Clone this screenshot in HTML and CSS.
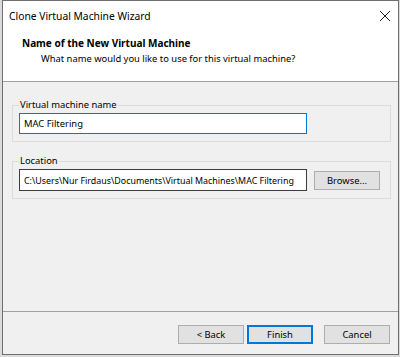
FILE: index.html
```html
<!DOCTYPE html>
<html lang="en">
  <head>
    <meta charset="UTF-8" />
    <meta name="viewport" content="width=device-width, initial-scale=1.0" />
    <title>Clone Virtual Machine Wizard</title>
    <link rel="stylesheet" href="styles.css">
  </head>
  <body>
    <div class="wizard">
      <div class="titlebar">
        <span class="title">Clone Virtual Machine Wizard</span>
        <svg class="close" width="12" height="12" viewBox="0 0 12 12">
          <path d="M1 1 L11 11 M11 1 L1 11" stroke="#222" stroke-width="1" fill="none" />
        </svg>
      </div>

      <div class="header">
        <h2 class="header-title">Name of the New Virtual Machine</h2>
        <p class="header-sub">What name would you like to use for this virtual machine?</p>
      </div>

      <div class="content">
        <fieldset class="group">
          <legend>Virtual machine name</legend>
          <input type="text" class="textbox focused" value="MAC Filtering" />
        </fieldset>

        <fieldset class="group">
          <legend>Location</legend>
          <div class="row">
            <input type="text" class="textbox path" value="C:\Users\Nur Firdaus\Documents\Virtual Machines\MAC Filtering" />
            <button class="btn browse">Browse...</button>
          </div>
        </fieldset>
      </div>

      <div class="footer">
        <button class="btn">&lt; Back</button>
        <button class="btn default">Finish</button>
        <button class="btn cancel">Cancel</button>
      </div>
    </div>
  </body>
</html>
```

FILE: styles.css
```css
* {
  margin: 0;
  padding: 0;
  box-sizing: border-box;
}

body {
  font-family: "Noto Sans", "Open Sans", sans-serif;
  font-size: 9.4px;
  color: #000;
  background-color: #dadada;
  width: 400px;
  height: 357px;
  overflow: hidden;
}

.wizard {
  margin-left: 2px;
  width: 397px;
  height: 355px;
  border: 1px solid #6f6f6f;
  background-color: #f0f0f0;
  display: flex;
  flex-direction: column;
}

.titlebar {
  height: 29px;
  background-color: #fff;
  display: flex;
  align-items: center;
  justify-content: space-between;
  padding: 0 7px 0 6px;
}

.title {
  font-size: 10.3px;
}

.header {
  height: 52px;
  background-color: #fff;
  border-bottom: 1px solid #a0a0a0;
  padding: 6px 0 0 19px;
}

.header-title {
  font-size: 10px;
  font-weight: bold;
  line-height: 15px;
}

.header-sub {
  line-height: 15px;
  padding-left: 19px;
}

.content {
  flex: 1;
  padding: 16px 7px 0 9px;
}

.group {
  border: 1px solid #dcdcdc;
  padding: 1px 6px 7px 6px;
  margin-bottom: 12px;
}

.group legend {
  padding: 0 1px;
  line-height: 14px;
}

.textbox {
  display: block;
  width: 288px;
  height: 21px;
  padding: 0 4px;
  font-family: inherit;
  font-size: 9.4px;
  border: 1px solid #3c3c3c;
  background-color: #fff;
  outline: none;
}

.textbox.focused {
  border-color: #0078d7;
}

.row {
  display: flex;
  align-items: center;
}

.textbox.path {
  height: 22px;
  padding: 0 2px 0 4px;
  font-size: 8.9px;
}

.btn {
  width: 66px;
  height: 19px;
  font-family: inherit;
  font-size: 9.4px;
  background-color: #e1e1e1;
  border: 1px solid #adadad;
  color: #000;
}

.browse {
  margin-left: 7px;
}

.footer {
  height: 43px;
  border-top: 1px solid #a0a0a0;
  display: flex;
  justify-content: flex-end;
  padding: 13px 8px 0 0;
}

.footer .btn {
  margin-left: 3px;
}

.btn.default {
  border: 2px solid #0078d7;
}

.footer .cancel {
  margin-left: 11px;
}
```
